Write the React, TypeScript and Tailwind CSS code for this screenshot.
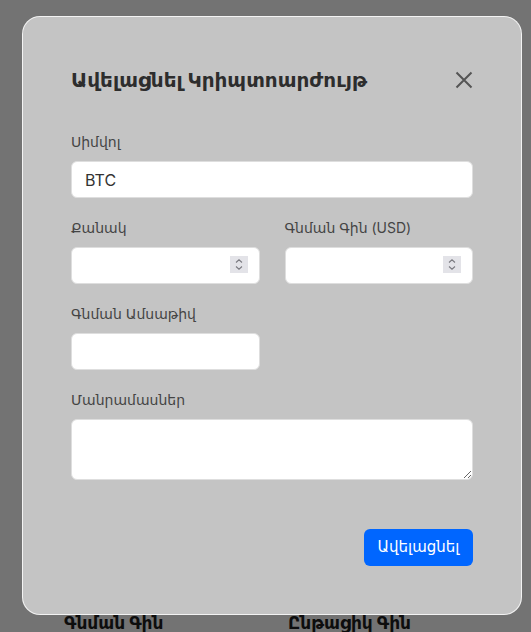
import { useState } from "react";

const font = { fontFamily: 'Inter, "DejaVu Sans", sans-serif' };

const Spinner = () => (
  <div className="pointer-events-none absolute right-[12px] top-[9px] flex h-[17px] w-[18px] items-center justify-center bg-[#e3e3e8]">
    <svg width="10" height="13" viewBox="0 0 10 13" fill="none" stroke="#7a7a80" strokeWidth="1.1">
      <path d="M2 4.5 L5 1.8 L8 4.5" />
      <path d="M2 8.5 L5 11.2 L8 8.5" />
    </svg>
  </div>
);

const Field = ({ label, children }: { label: string; children: React.ReactNode }) => (
  <div className="flex flex-col">
    <label className="mb-[9px] text-[14px] leading-5 text-[#444]">{label}</label>
    {children}
  </div>
);

const inputCls =
  "h-[37px] w-full rounded-md border border-[#dedede] bg-white px-[13px] text-[16px] text-[#333] outline-none";

export default function App() {
  const [symbol, setSymbol] = useState("BTC");

  return (
    <div className="h-[632px] w-full overflow-hidden bg-[#737373] pl-[22px] pt-4" style={font}>
      <div className="relative z-10 flex h-[599px] w-[500px] flex-col rounded-[18px] border border-white/80 bg-[#c4c4c4] px-12 pt-[49px]">
        <div className="flex h-7 items-center justify-between">
          <h2 className="text-[20px] font-bold leading-7 text-[#2d2d2d]">Ավելացնել Կրիպտոարժույթ</h2>
          <button type="button" className="text-[#555]">
            <svg width="18" height="18" viewBox="0 0 18 18" fill="none" stroke="currentColor" strokeWidth="2">
              <path d="M1.5 1.5 L16.5 16.5 M16.5 1.5 L1.5 16.5" />
            </svg>
          </button>
        </div>

        <div className="mt-[38px] flex flex-col gap-5">
          <Field label="Սիմվոլ">
            <input className={inputCls} value={symbol} onChange={(e) => setSymbol(e.target.value)} />
          </Field>

          <div className="grid grid-cols-2 gap-x-[25px] gap-y-5">
            <Field label="Քանակ">
              <div className="relative">
                <input className={inputCls} />
                <Spinner />
              </div>
            </Field>
            <Field label="Գնման Գին (USD)">
              <div className="relative">
                <input className={inputCls} />
                <Spinner />
              </div>
            </Field>
            <Field label="Գնման Ամսաթիվ">
              <input className={inputCls} />
            </Field>
          </div>

          <Field label="Մանրամասներ">
            <textarea className="block h-[61px] w-full rounded-md border border-[#dedede] bg-white px-[13px] py-2 text-[16px] text-[#333] outline-none" />
          </Field>
        </div>

        <div className="mt-[49px] flex justify-end">
          <button
            type="button"
            className="h-[37px] w-[109px] rounded-md bg-[#0066ff] text-[15px] text-white"
          >
            Ավելացնել
          </button>
        </div>
      </div>

      <div className="-mt-[2px] grid grid-cols-[224px_224px] pl-[42px] text-[17px] font-bold leading-5 text-[#0d0d0d]">
        <span>Գնման Գին</span>
        <span>Ընթացիկ Գին</span>
      </div>
    </div>
  );
}
